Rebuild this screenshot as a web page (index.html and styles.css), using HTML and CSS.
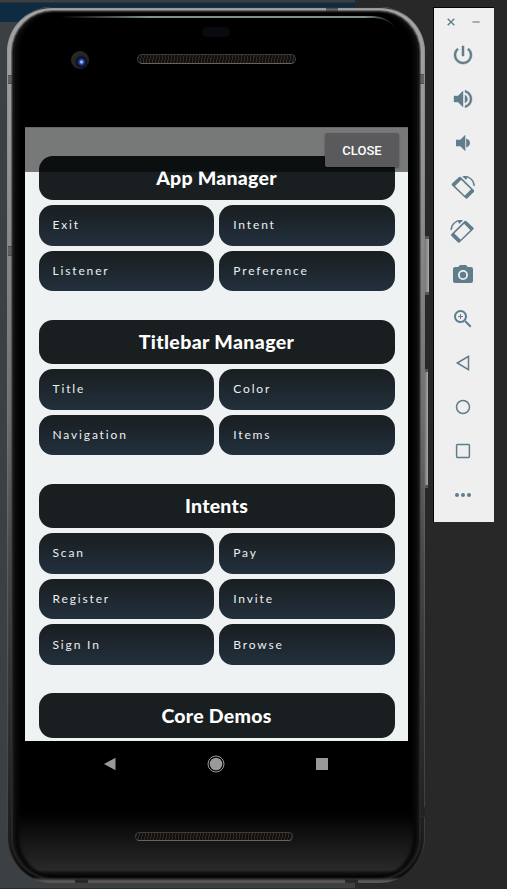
FILE: index.html
```html
<!DOCTYPE html>
<html lang="en">
<head>
<meta charset="utf-8">
<title>Android Emulator</title>
<link rel="stylesheet" href="styles.css">
</head>
<body>
<div class="desktop">
  <div class="phone">
    <i class="side-key power-key"></i><i class="side-key volume-key"></i>
    <i class="seam seam-a"></i><i class="seam seam-b"></i><i class="seam seam-c"></i><i class="seam seam-d"></i><i class="seam seam-e"></i><i class="seam seam-f"></i><i class="seam seam-g"></i>
    <div class="glass">
      <i class="shine"></i>
      <i class="sensor"></i>
      <i class="camera"></i>
      <i class="grille grille-top"></i>
      <main class="screen">
        <div class="scrim"><button class="close">CLOSE</button></div>
        <section>
          <h2>App Manager</h2>
          <div class="grid"><a>Exit</a><a>Intent</a><a>Listener</a><a>Preference</a></div>
        </section>
        <section>
          <h2 class="wide">Titlebar Manager</h2>
          <div class="grid"><a>Title</a><a>Color</a><a>Navigation</a><a>Items</a></div>
        </section>
        <section>
          <h2>Intents</h2>
          <div class="grid"><a>Scan</a><a>Pay</a><a>Register</a><a>Invite</a><a>Sign In</a><a>Browse</a></div>
        </section>
        <section>
          <h2>Core Demos</h2>
        </section>
      </main>
      <nav class="navbar">
        <svg width="20" height="20" viewBox="0 0 20 20"><path d="M4 10 15.5 3.8V16.2Z" fill="#999"/></svg>
        <svg width="20" height="20" viewBox="0 0 20 20"><circle cx="10" cy="10" r="8" fill="none" stroke="#999"/><circle cx="10" cy="10" r="6.3" fill="#999"/></svg>
        <svg width="20" height="20" viewBox="0 0 20 20"><path d="M4 4H16V16H4Z" fill="#999"/></svg>
      </nav>
      <i class="grille grille-bottom"></i>
    </div>
  </div>
  <aside class="tools">
    <div class="window-controls">
      <svg width="10" height="10" viewBox="0 0 10 10"><path d="M1.7 1.7 8.3 8.3M8.3 1.7 1.7 8.3" stroke="#607d8b" stroke-width="1.4"/></svg>
      <svg width="10" height="10" viewBox="0 0 10 10"><path d="M1.5 5H8.7" stroke="#8ba0aa" stroke-width="1.6"/></svg>
    </div>
    <svg class="tool" viewBox="0 0 24 24"><path stroke="#607d8b" stroke-width=".5" d="M13 3h-2v10h2V3zm4.83 2.17-1.42 1.42A6.92 6.92 0 0 1 19 12a7 7 0 1 1-11.41-5.42L6.17 5.17A8.93 8.93 0 0 0 3 12a9 9 0 1 0 14.83-6.83z"/></svg>
    <svg class="tool" viewBox="0 0 24 24"><path stroke="#607d8b" stroke-width=".4" d="M3 9v6h4l5 5V4L7 9H3zm13.5 3A4.500 4.500 0 0 0 14 7.970v8.050c1.480-.73 2.500-2.250 2.500-4.020zM14 3.230v2.060c2.890.86 5 3.540 5 6.710s-2.110 5.850-5 6.710v2.060c4.010-.91 7-4.490 7-8.770s-2.990-7.860-7-8.770z"/></svg>
    <svg class="tool" viewBox="0 0 24 24"><path d="M5 8.700v6.600h4.300l5 5V3.700L9.300 8.700H5zm10.200-1.200v9c2.300-.7 3.800-2.500 3.800-4.500s-1.500-3.800-3.800-4.500z"/></svg>
    <svg class="tool" viewBox="0 0 24 24"><g id="rotate"><path fill-rule="evenodd" d="M8 2.200Q9 1.500 10 2.300L22.800 15Q23.700 16 22.800 17L16.500 23.300Q15.500 24 14.500 23.300L1.100 10.500Q.2 9.500 1.100 8.500ZM9.800 4.600 3.700 10.700 14.400 21.200 20.500 15.100Z"/><path d="m8 2.200 2.500 2.300-7 7L.8 9.500ZM20.400 14l2.700 2-7.600 7.600-2.200-2.700Z"/><path d="M12.500 1.700C18.500 1.100 23 5.100 23.200 11" fill="none" stroke="#607d8b" stroke-width="1.300"/><path d="m11.200 1.300 5.500-.4-1.500 4Z"/></g></svg>
    <svg class="tool" viewBox="0 0 24 24"><use href="#rotate" transform="matrix(-1 0 0 1 23.300 0)"/></svg>
    <svg class="tool" viewBox="0 0 24 24"><path fill-rule="evenodd" d="M9 2 7.170 4H4a2 2 0 0 0-2 2v12c0 1.100.9 2 2 2h16a2 2 0 0 0 2-2V6a2 2 0 0 0-2-2h-3.170L15 2H9zm3 15a5 5 0 1 1 0-10 5 5 0 0 1 0 10z"/><circle cx="12" cy="12" r="3.200"/></svg>
    <svg class="tool" viewBox="0 0 24 24"><path d="M15.500 14h-.79l-.28-.27A6.500 6.500 0 1 0 13.730 14.430l.27.28v.79l5 4.990L20.490 19l-4.990-5zm-6 0a4.500 4.500 0 1 1 0-9 4.500 4.500 0 0 1 0 9zM12 10h-2v2H9v-2H7V9h2V7h1v2h2v1z"/></svg>
    <svg class="tool line" viewBox="0 0 24 24"><path d="M6.300 12 17.500 5.300V18.700Z"/></svg>
    <svg class="tool line" viewBox="0 0 24 24"><circle cx="12" cy="12" r="6.500"/></svg>
    <svg class="tool line" viewBox="0 0 24 24"><rect x="5.600" y="5.600" width="12.800" height="12.800" rx=".8"/></svg>
    <svg class="tool" viewBox="0 0 24 24"><circle cx="6" cy="12" r="2"/><circle cx="12" cy="12" r="2"/><circle cx="18" cy="12" r="2"/></svg>
  </aside>
</div>
</body>
</html>
```
FILE: styles.css
```css
* { box-sizing: border-box; }
body { margin: 0; background: #282828; font-family: Lato, "Open Sans", sans-serif; }
.desktop {
  width: 507px; height: 889px; overflow: hidden;
  display: flex; align-items: flex-start; padding: 7px 0 0 7px;
  background:
    linear-gradient(#3c3f41 0 2px, #303335 2px 3px, #0d2b42 3px 22px, #3c4043 22px 888px, #292b2d 888px) 0 0 / 355px 889px no-repeat,
    #282828;
}
.phone {
  position: relative; flex: none; width: 418px; height: 876px; padding: 5px 6px 5px;
  border-radius: 45px 45px 46px 46px;
  background: linear-gradient(#a5a5a5 0, #959595 150px, #707070 400px, #484848 550px, #303030 700px, #1c1c1c 830px, #0c0c0c 870px, #5b5757 874px);
  box-shadow: inset 2px 0 1px -1px #8886, inset -2px 0 1px -1px #7776, inset 0 3px 1px -2px #222;
}
.glass {
  position: relative; height: 866px; border-radius: 40px; overflow: hidden;
  display: flex; flex-direction: column; align-items: center;
  background: linear-gradient(#000 0 800px, #0b0b0b 815px, #292929 858px, #111 861px, #000);
  box-shadow: 0 0 0 1px #222c, 0 0 0 2px #3338;
}
.glass::before {
  content: ""; position: absolute; inset: 0; border-radius: 40px;
  box-shadow: inset 2px 0 2px #151515, inset -2px 0 2px #151515, inset 6px 0 3px #080808, inset -6px 0 3px #080808;
}
.shine { position: absolute; left: 30px; top: 4px; width: 357px; height: 44px; border-top: 2px solid #83918a; border-radius: 0 26px 0 0; mask-image: linear-gradient(90deg, transparent 5%, #000 30% 90%, transparent 99%); }
.sensor { position: absolute; left: 189px; top: 15px; width: 28px; height: 10px; border-radius: 5px; background: #080a10; }
.camera { position: absolute; left: 58px; top: 39px; width: 18px; height: 18px; border-radius: 50%; background: radial-gradient(circle at 10.500px 11px, #a4b4f5 0 1px, #354cae 2px, #101a48 4px, #070a18 5px, #222 6px, #292727 9px); }
.grille { flex: none; width: 159px; height: 10px; border: 1px solid #3e3b38; border-bottom-color: #69645b; border-radius: 5px; background: repeating-linear-gradient(100deg, #302b27 0 1px, #12100f 1px 3px); }
.grille-top { margin: 42px 0 63px 1px; }
.grille-bottom { margin: 58px 4px 0 0; height: 9px; width: 158px; }
.screen { position: relative; flex: none; width: 383px; height: 614px; margin-left: 1px; padding: 28.700px 13.500px 0; background: #eef2f3; overflow: hidden; display: flex; flex-direction: column; gap: 28.200px; }
.scrim { position: absolute; left: 0; top: 0; width: 100%; height: 45px; background: rgba(0,0,0,.5); display: flex; justify-content: flex-end; padding: 5px 9px 0; z-index: 1; border-top: 1px solid #666; }
.close { width: 74px; height: 34px; margin: 0; padding: 0; border: 0; border-radius: 2px; background: #5a5a5c; color: #fff; font: 500 13px Roboto, sans-serif; box-shadow: 0 1px 2px #0006; }
section { display: flex; flex-direction: column; gap: 5px; }
h2 { margin: 0; height: 44.300px; display: flex; align-items: center; justify-content: center; border-radius: 14px; background: #191e20; color: #fff; font-size: 19.500px; font-weight: 900; letter-spacing: .250px; }
h2.wide { letter-spacing: .370px; }
.grid { display: grid; grid-template-columns: 1fr 1fr; gap: 5px 5.500px; }
.grid a { height: 40.750px; display: flex; align-items: center; padding: 0 0 1.300px 14px; border-radius: 14px; background: linear-gradient(#191e20, #22303d); color: #eceeef; font-size: 12px; letter-spacing: 1.850px; }
.navbar { flex: none; display: flex; justify-content: center; gap: 86px; width: 383px; height: 33px; padding-top: 13px; margin-right: 1px; }
.navbar svg { display: block; flex: none; }
.seam { position: absolute; background: #555c; border: solid #3336; border-width: 1px 0; }
.seam-a { left: 1px; top: 68px; width: 6px; height: 9px; }
.seam-b { right: 1px; top: 67px; width: 5px; height: 10px; }
.seam-c { left: 1px; top: 239px; width: 6px; height: 10px; }
.seam-d { right: 0; top: 800px; width: 5px; height: 10px; background: #222; }
.seam-e { left: 319px; top: 1px; width: 12px; height: 5px; }
.seam-f { left: 68px; bottom: 0; width: 13px; height: 5px; background: #282828; }
.seam-g { left: 338px; bottom: 0; width: 13px; height: 5px; background: #282828; }
.side-key { position: absolute; left: 418px; width: 4px; background: linear-gradient(90deg, #777, #aaa); border: solid #555; border-width: 3px 0; }
.power-key { top: 229px; height: 59px; }
.volume-key { top: 362px; height: 119px; width: 3px; }
.tools { flex: none; width: 61px; height: 515px; margin-left: 8px; padding-top: 9px; border: solid #050505; border-width: 1px 0 0 1px; background: #efefef; display: flex; flex-direction: column; align-items: center; gap: 20px; }
.window-controls { display: flex; gap: 15px; height: 10px; margin: 0 2px -4px 0; }
.window-controls svg { display: block; }
.tool { flex: none; display: block; width: 24px; height: 24px; margin-right: 2px; fill: #607d8b; overflow: visible; }
.line { fill: none; stroke: #607d8b; stroke-width: 1.500px; }
```
